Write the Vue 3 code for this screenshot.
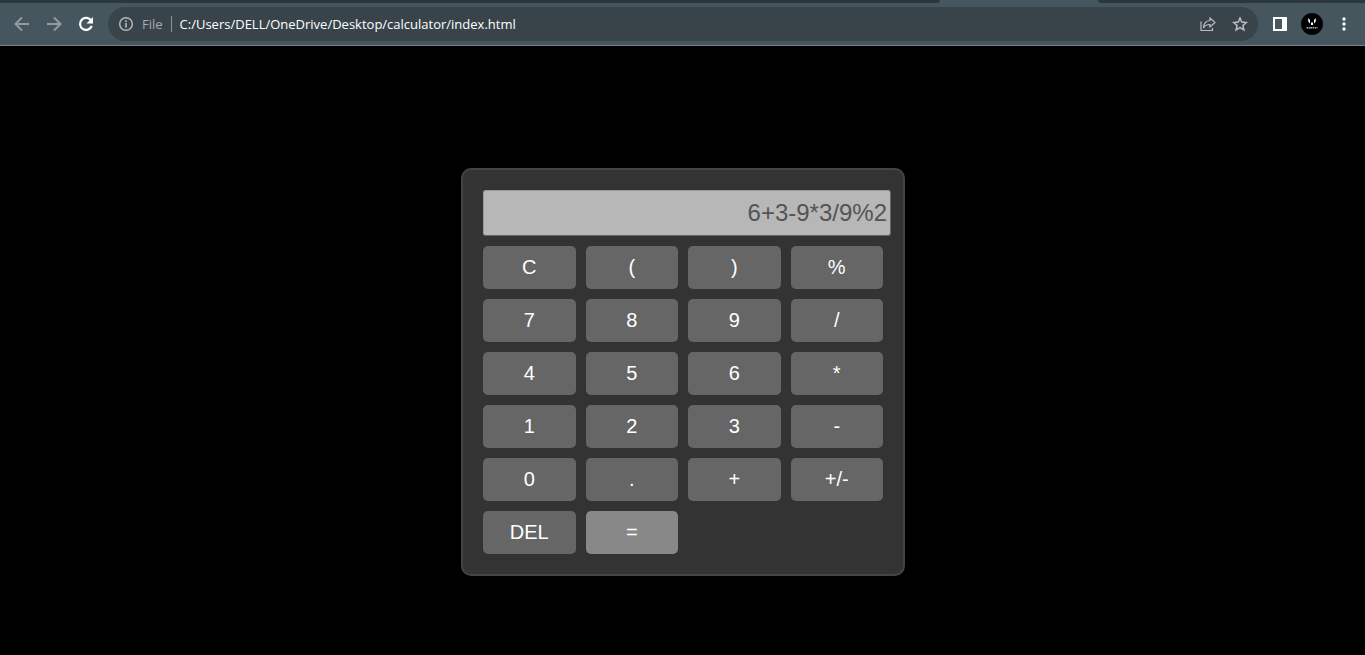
<script setup>
import { ref } from 'vue'

const display = ref('6+3-9*3/9%2')
const address = ref('C:/Users/DELL/OneDrive/Desktop/calculator/index.html')
const keys = ['C', '(', ')', '%', '7', '8', '9', '/', '4', '5', '6', '*', '1', '2', '3', '-', '0', '.', '+', '+/-', 'DEL', '=']

function press(key) {
  if (key === 'C') display.value = ''
  else if (key === 'DEL') display.value = display.value.slice(0, -1)
  else if (key === '+/-') display.value = display.value.startsWith('-') ? display.value.slice(1) : '-' + display.value
  else if (key !== '=') display.value += key
}
</script>

<template>
  <div class="browser">
    <header class="chrome">
      <div class="tabstrip"><span class="tabs-before"></span><span class="tab"></span><span class="tabs-after"></span></div>
      <div class="toolbar">
        <button class="tool dim" aria-label="Back">
          <svg width="16" height="16" viewBox="0 0 16 16" fill="none" stroke="currentColor" stroke-width="2"><path d="M15 8H2M8 1.5 1.5 8 8 14.5" /></svg>
        </button>
        <button class="tool dim" aria-label="Forward">
          <svg width="16" height="16" viewBox="0 0 16 16" fill="none" stroke="currentColor" stroke-width="2"><path d="M1 8h13M8 1.5 14.5 8 8 14.5" /></svg>
        </button>
        <button class="tool" aria-label="Reload">
          <svg width="16" height="16" viewBox="0 0 16 16"><path d="M13.2 4.8A6 6 0 1 0 13.7 10" fill="none" stroke="currentColor" stroke-width="2.2" /><path d="M15 1v6.500H8.500z" fill="currentColor" /></svg>
        </button>
        <div class="omnibox">
          <svg class="info" width="16" height="16" viewBox="0 0 16 16" fill="none" stroke="currentColor" stroke-width="1.5"><circle cx="8" cy="8" r="6.3" /><path d="M8 7v4.500M8 4.300v1.700" stroke-width="1.7" /></svg>
          <span class="scheme">File</span>
          <span class="divider"></span>
          <input v-model="address" class="address" type="text" aria-label="Address" spellcheck="false" />
          <button class="tool light" aria-label="Share">
            <svg width="16" height="16" viewBox="0 0 16 16" fill="none" stroke="currentColor" stroke-width="1.2"><path d="M1 5.500V14.500h11.500V12M10 2l5 4.500-5 4.500V8.500C6.500 8.500 4.500 9.800 3.500 12 3.700 7.500 6 4.800 10 4.500z" /></svg>
          </button>
          <button class="tool light" aria-label="Bookmark">
            <svg width="16" height="16" viewBox="0 0 16 16" fill="none" stroke="currentColor" stroke-width="1.5"><path d="M8 2l1.800 4.100 4.500.4-3.400 3 1 4.400L8 11.600l-3.900 2.300 1-4.400-3.400-3 4.500-.4z" /></svg>
          </button>
        </div>
        <button class="tool" aria-label="Side panel">
          <svg width="16" height="16" viewBox="0 0 16 16"><path fill="currentColor" fill-rule="evenodd" d="M1 1h14v14H1zM3 3v10h7V3z" /></svg>
        </button>
        <button class="tool profile" aria-label="Profile">
          <svg width="22" height="22" viewBox="0 0 22 22"><circle cx="11" cy="11" r="11" fill="#000" /><path d="M7 5l2 2v3.500L7.500 9zM15 5l-2 2v3.500L14.500 9zM10 9.500h2V12h-2z" fill="#fff" /><path d="M5.500 14.800h11" stroke="#aaa" stroke-width="1.5" stroke-dasharray="1.5 .5" /><path d="M8 14.800h2" stroke="#299bc2" stroke-width="1.5" /></svg>
        </button>
        <button class="tool" aria-label="Menu">
          <svg width="16" height="16" viewBox="0 0 16 16" fill="currentColor"><circle cx="8" cy="3" r="1.7" /><circle cx="8" cy="8" r="1.7" /><circle cx="8" cy="13" r="1.7" /></svg>
        </button>
      </div>
    </header>
    <main class="page">
      <section class="calculator" aria-label="Calculator">
        <input v-model="display" class="display" type="text" aria-label="Expression" disabled />
        <div class="keys">
          <button v-for="key in keys" :key="key" class="key" :class="{ equals: key === '=' }" @click="press(key)">{{ key }}</button>
        </div>
      </section>
    </main>
  </div>
</template>

<style>
body {
  margin: 0;
  background: #000;
}
</style>

<style scoped>
.browser {
  display: flex;
  flex-direction: column;
  min-height: 100vh;
  background: #000;
}
.chrome {
  background: #45565f;
  border-bottom: 1px solid #75828a;
}
.tabstrip {
  display: flex;
  height: 3px;
  background: #45565f;
}
.tabs-before {
  flex: 940;
  background: #2b373c;
  border-bottom-right-radius: 3px;
}
.tab {
  flex: 158;
}
.tabs-after {
  flex: 267;
  background: #2b373c;
  border-bottom-left-radius: 3px;
}
.toolbar {
  display: flex;
  align-items: center;
  gap: 16px;
  padding: 4px 13px 4px 14px;
}
.tool {
  display: flex;
  flex: none;
  padding: 0;
  border: 0;
  background: none;
  color: #fff;
}
.profile {
  margin: 0 -3px;
}
.dim {
  color: #919b9f;
}
.light {
  color: #b9bec1;
}
.omnibox {
  display: flex;
  flex: 1;
  align-items: center;
  gap: 8px;
  height: 34px;
  min-width: 0;
  margin: 0 -2px;
  padding: 0 10px;
  box-sizing: border-box;
  border-radius: 17px;
  background: #38444a;
  font: 13px "Open Sans", "Noto Sans", sans-serif;
}
.info {
  flex: none;
  color: #b0b6b9;
}
.scheme {
  color: #a5abae;
}
.divider {
  width: 1px;
  height: 16px;
  background: #899196;
}
.address {
  flex: 1;
  min-width: 0;
  padding: 0;
  border: 0;
  outline: 0;
  background: none;
  color: #fff;
  font: inherit;
}
.omnibox .tool + .tool {
  margin-left: 8px;
}
.page {
  display: flex;
  flex: 1;
  justify-content: center;
  align-items: flex-start;
  padding: 122px 16px 0 17px;
}
.calculator {
  width: 400px;
  padding: 20px;
  border: 2px solid #444;
  border-radius: 10px;
  background: #333;
  font-family: "Liberation Sans", Arial, sans-serif;
}
.display {
  display: block;
  box-sizing: border-box;
  width: 408px;
  height: 46px;
  margin: 0 0 10px;
  padding: 0 3px 0 2px;
  border: 1px solid;
  border-color: #999 #666 #666 #999;
  border-radius: 3px;
  background: #b7b7b7;
  color: #545454;
  font: 24px "Liberation Sans", Arial, sans-serif;
  text-align: right;
}
.keys {
  display: grid;
  grid-template-columns: repeat(4, 1fr);
  gap: 10px;
}
.key {
  height: 43px;
  padding: 0;
  border: 0;
  border-radius: 5px;
  background: #666;
  color: #fff;
  font: 20px "Liberation Sans", Arial, sans-serif;
}
.equals {
  background: #888;
}
</style>
